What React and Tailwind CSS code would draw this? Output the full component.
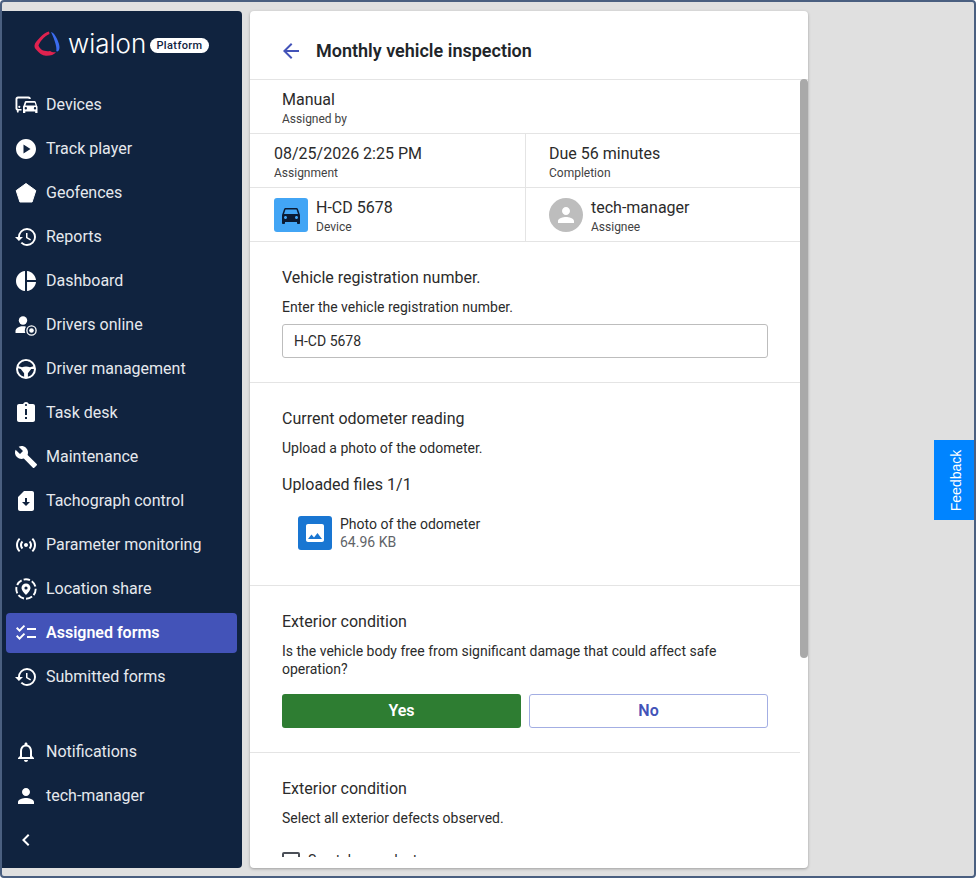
import React from "react";
import { MdPlayCircle, MdHistory, MdPieChart, MdPerson, MdBuild, MdSensors, MdChecklist, MdNotificationsNone, MdChevronLeft, MdDirectionsCar, MdImage, MdArrowBack, MdAssignmentLate, MdSimCardDownload } from "react-icons/md";

const Svg = ({ children }) => (
  <svg viewBox="0 0 24 24" width="24" height="24" fill="white">{children}</svg>
);
const DevicesIcon = () => (
  <Svg>
    <path d="M1.500 6C1.500 4.500 2.500 3.500 4 3.500h10.500c1.300 0 2.200.8 2.400 2.500h-2c-.1-.4-.3-.6-.6-.6H4.200c-.5 0-.8.3-.8.8V15c0 .5.300.9.800.9H7.500v1.700H4.800l-.3 1.900H3l-.3-2.200C2 16.900 1.500 16.200 1.500 15.500z" />
    <circle cx="5.300" cy="13.800" r="1.100" />
    <path d="M12 8h8.500c.6 0 1 .3 1.200.8l1.300 4c.4.300.5.700.5 1.100V20h-2.300v-1.500H11.300V20H9V13.900c0-.4.200-.8.500-1.100l1.300-4c.2-.5.600-.8 1.200-.8zM12.300 9.800l-.9 2.700h10.200l-.9-2.700zM11.800 14a1.200 1.200 0 100 2.400 1.200 1.200 0 000-2.400zM21 14a1.200 1.200 0 100 2.400 1.200 1.200 0 000-2.400z" fillRule="evenodd" />
  </Svg>
);
const Pentagon = () => (
  <Svg><path d="M12 2.500l9.800 7.100-3.700 11.400H5.900L2.200 9.600z" stroke="white" strokeWidth="1" strokeLinejoin="round" /></Svg>
);
const DriversOnline = () => (
  <Svg>
    <circle cx="9" cy="7.500" r="4.200" />
    <path d="M1.500 20v-2c0-2.800 3.900-4.700 7.500-4.700 1 0 2 .1 3 .4-.8 1-1.200 2.300-1.200 3.800 0 .9.200 1.700.5 2.500z" />
    <circle cx="17.500" cy="17.500" r="4.600" fill="none" stroke="white" strokeWidth="1.300" />
    <circle cx="17.500" cy="17.500" r="2.300" />
  </Svg>
);
const Wheel = () => (
  <Svg>
    <path fillRule="evenodd" d="M12 2a10 10 0 110 20 10 10 0 010-20zm0 2.100c-3.400 0-6.300 2.200-7.400 5.200L8 10.300c1.200-.6 2.600-.9 4-.9s2.800.3 4 .9l3.400-1c-1.100-3-4-5.200-7.400-5.200zM4.100 12c0 3.700 2.600 6.900 6 7.700v-3.500L6.800 12.100l-2.700-.8zM19.900 12l-2.700.1-3.300 4.100v3.500c3.400-.8 6-4 6-7.700z" />
    <circle cx="12" cy="13" r="1.500" />
  </Svg>
);
const LocationShare = () => (
  <Svg>
    <circle cx="12" cy="12" r="9.700" fill="none" stroke="white" strokeWidth="1.900" strokeDasharray="6.500 2.100" />
    <path fillRule="evenodd" d="M12 6.500c2.500 0 4.500 2 4.500 4.400 0 2.900-4.500 6.800-4.500 6.800s-4.500-3.900-4.500-6.800c0-2.400 2-4.400 4.500-4.400zm0 2.900a1.600 1.600 0 100 3.200 1.600 1.600 0 000-3.200z" />
  </Svg>
);

const ic = (C) => <C size={24} color="white" />;
const items = [
  ["Devices", <DevicesIcon />],
  ["Track player", ic(MdPlayCircle)],
  ["Geofences", <Pentagon />],
  ["Reports", ic(MdHistory)],
  ["Dashboard", ic(MdPieChart)],
  ["Drivers online", <DriversOnline />],
  ["Driver management", <Wheel />],
  ["Task desk", ic(MdAssignmentLate)],
  ["Maintenance", ic(MdBuild)],
  ["Tachograph control", ic(MdSimCardDownload)],
  ["Parameter monitoring", ic(MdSensors)],
  ["Location share", <LocationShare />],
  ["Assigned forms", ic(MdChecklist), true],
  ["Submitted forms", ic(MdHistory)],
];

const NavItem = ({ label, icon, active }) => (
  <div className="h-[44px] flex items-center px-[4px]">
    <div className={`h-[40px] w-[231px] flex items-center gap-[8px] pl-[8px] rounded-[4px] ${active ? "bg-[#4353b8]" : ""}`}>
      <span className="w-[24px] h-[24px] flex items-center justify-center shrink-0">{icon}</span>
      <span className={`text-[16px] ${active ? "font-semibold text-white" : "text-[#e6e9ee]"}`}>{label}</span>
    </div>
  </div>
);

const Logo = () => (
  <div className="h-[72px] flex items-center pl-[32px] pb-[6px]">
    <svg viewBox="0 0 26 26" width="26" height="26" className="shrink-0">
      <path d="M15 .5C12 1 9 3 6 6.500 3 9.500.8 12 .5 14.500c-.2 2 .8 3.500 2.500 5 2 2.500 5 5 9 5.200 4 .2 8-1 10-3.500-3 .5-4.500-.5-6-1.200-3 .5-6 0-8-1-1.500-1-3-3-3.500-4.500C5.500 11.500 10 5 15.500 3z" fill="#e0224f" />
      <path d="M17 1c3 .5 6.500 6.500 8 12 .8 3 .6 5.500-.5 6.800-.6.7-1.300.8-2.200.5.700-4-1-10-5.300-19.300z" fill="#3b6cf0" />
    </svg>
    <span className="ml-[8px] w-[76px] text-white text-[26px] leading-none font-light font-['Inter',sans-serif]">wialon</span>
    <span className="ml-[6px] mt-[3px] bg-white text-[#10233f] rounded-full h-[15px] w-[59px] flex items-center justify-center text-[11px] font-medium tracking-[0.4px] leading-none">Platform</span>
  </div>
);

const Cell = ({ value, label, className = "" }) => (
  <div className={className}>
    <div className="text-[16px] leading-[20px] text-[#2b2b2b]">{value}</div>
    <div className="text-[12px] leading-[16px] text-[#424242] mt-[1px]">{label}</div>
  </div>
);

const Section = ({ title, help, className = "", children }) => (
  <div className={`px-[32px] border-b border-[#e4e4e4] ${className}`}>
    <div className="text-[16px] leading-[20px] text-[#2b2b2b]">{title}</div>
    <div className="text-[14px] leading-[18px] text-[#2b2b2b] mt-[10px]">{help}</div>
    {children}
  </div>
);

export default function App() {
  return (
    <div className="w-[976px] h-[878px] border-2 border-[#4a5f80] rounded-[4px] bg-[#e0e0e0] flex gap-[8px] pt-[9px] pb-[8px] relative overflow-hidden font-['Roboto',sans-serif]">
      <aside className="w-[240px] bg-[#10233f] rounded-r-[4px] flex flex-col shrink-0">
        <Logo />
        {items.map(([l, i, a]) => <NavItem key={l} label={l} icon={i} active={a} />)}
        <div className="flex-1" />
        <NavItem label="Notifications" icon={ic(MdNotificationsNone)} />
        <NavItem label="tech-manager" icon={ic(MdPerson)} />
        <div className="h-[50px] pb-[6px] flex items-center pl-[12px]"><MdChevronLeft size={24} color="white" /></div>
      </aside>

      <main className="w-[558px] bg-white rounded-[4px] shadow-[0_1px_3px_rgba(0,0,0,0.3)] flex flex-col relative pb-[11px]">
        <header className="h-[69px] shrink-0 border-b border-[#e4e4e4] flex items-center pl-[29px] gap-[13px] pt-[11px]">
          <MdArrowBack size={24} color="#4353b8" />
          <h1 className="text-[18px] font-semibold text-[#212529]">Monthly vehicle inspection</h1>
        </header>
        <div className="flex-1 overflow-hidden min-h-0 w-[550px]">
          <div className="h-[54px] border-b border-[#e4e4e4] pl-[32px] pt-[10px]">
            <Cell value="Manual" label="Assigned by" />
          </div>
          <div className="h-[54px] border-b border-[#e4e4e4] flex">
            <Cell value="08/25/2026 2:25 PM" label="Assignment" className="w-[276px] border-r border-[#e4e4e4] pl-[24px] pt-[10px]" />
            <Cell value="Due 56 minutes" label="Completion" className="pl-[23px] pt-[10px]" />
          </div>
          <div className="h-[54px] border-b border-[#e4e4e4] flex">
            <div className="w-[276px] border-r border-[#e4e4e4] pl-[24px] flex gap-[8px] pt-[10px]">
              <span className="w-[34px] h-[34px] rounded-[3px] bg-[#42a5f5] flex items-center justify-center"><MdDirectionsCar size={24} color="#0b1b33" /></span>
              <Cell value="H-CD 5678" label="Device" />
            </div>
            <div className="pl-[23px] flex gap-[8px] pt-[10px]">
              <span className="w-[34px] h-[34px] rounded-full bg-[#bdbdbd] flex items-center justify-center"><MdPerson size={24} color="white" /></span>
              <Cell value="tech-manager" label="Assignee" />
            </div>
          </div>

          <Section title="Vehicle registration number." help="Enter the vehicle registration number." className="h-[141px] pt-[26px]">
            <div className="mt-[8px] w-[486px] h-[34px] border border-[#bdbdbd] rounded-[3px] flex items-center px-[11px] text-[14px] text-[#2b2b2b]">H-CD 5678</div>
          </Section>

          <Section title="Current odometer reading" help="Upload a photo of the odometer." className="h-[203px] pt-[26px]">
            <div className="text-[16px] leading-[20px] text-[#2b2b2b] mt-[18px]">Uploaded files 1/1</div>
            <div className="flex items-center gap-[8px] ml-[16px] mt-[20px]">
              <span className="w-[34px] h-[34px] rounded-[3px] bg-[#1976d2] flex items-center justify-center"><MdImage size={24} color="white" /></span>
              <div className="text-[14px] leading-[18px]">
                <div className="text-[#2b2b2b]">Photo of the odometer</div>
                <div className="text-[#5f6368]">64.96 KB</div>
              </div>
            </div>
          </Section>

          <Section title="Exterior condition" help="Is the vehicle body free from significant damage that could affect safe operation?" className="h-[167px] pt-[26px]">
            <div className="grid grid-cols-2 gap-[8px] mt-[16px] w-[486px]">
              <div className="h-[34px] rounded-[3px] bg-[#2e7d32] text-white text-[16px] font-semibold flex items-center justify-center">Yes</div>
              <div className="h-[34px] rounded-[3px] border border-[#a3aee3] text-[#4353b8] text-[16px] font-semibold flex items-center justify-center">No</div>
            </div>
          </Section>

          <div className="px-[32px] pt-[26px]">
            <div className="text-[16px] leading-[20px] text-[#2b2b2b]">Exterior condition</div>
            <div className="text-[14px] leading-[18px] text-[#2b2b2b] mt-[10px]">Select all exterior defects observed.</div>
            <div className="flex items-center gap-[8px] mt-[23px]">
              <span className="w-[18px] h-[18px] border-2 border-[#4a4f57] rounded-[2px] shrink-0" />
              <span className="text-[14px] text-[#2b2b2b]">Scratches or dents</span>
            </div>
          </div>
        </div>
        <div className="absolute right-0 top-[68px] w-[8px] h-[579px] rounded-[4px] bg-[#a9a9a9]" />
      </main>

      <div className="absolute right-0 top-[438px] w-[40px] h-[80px] bg-[#0084ff] flex items-center justify-center">
        <span className="ml-[6px] text-white text-[14px] font-['Liberation_Sans',sans-serif] -rotate-90 whitespace-nowrap">Feedback</span>
      </div>
    </div>
  );
}
